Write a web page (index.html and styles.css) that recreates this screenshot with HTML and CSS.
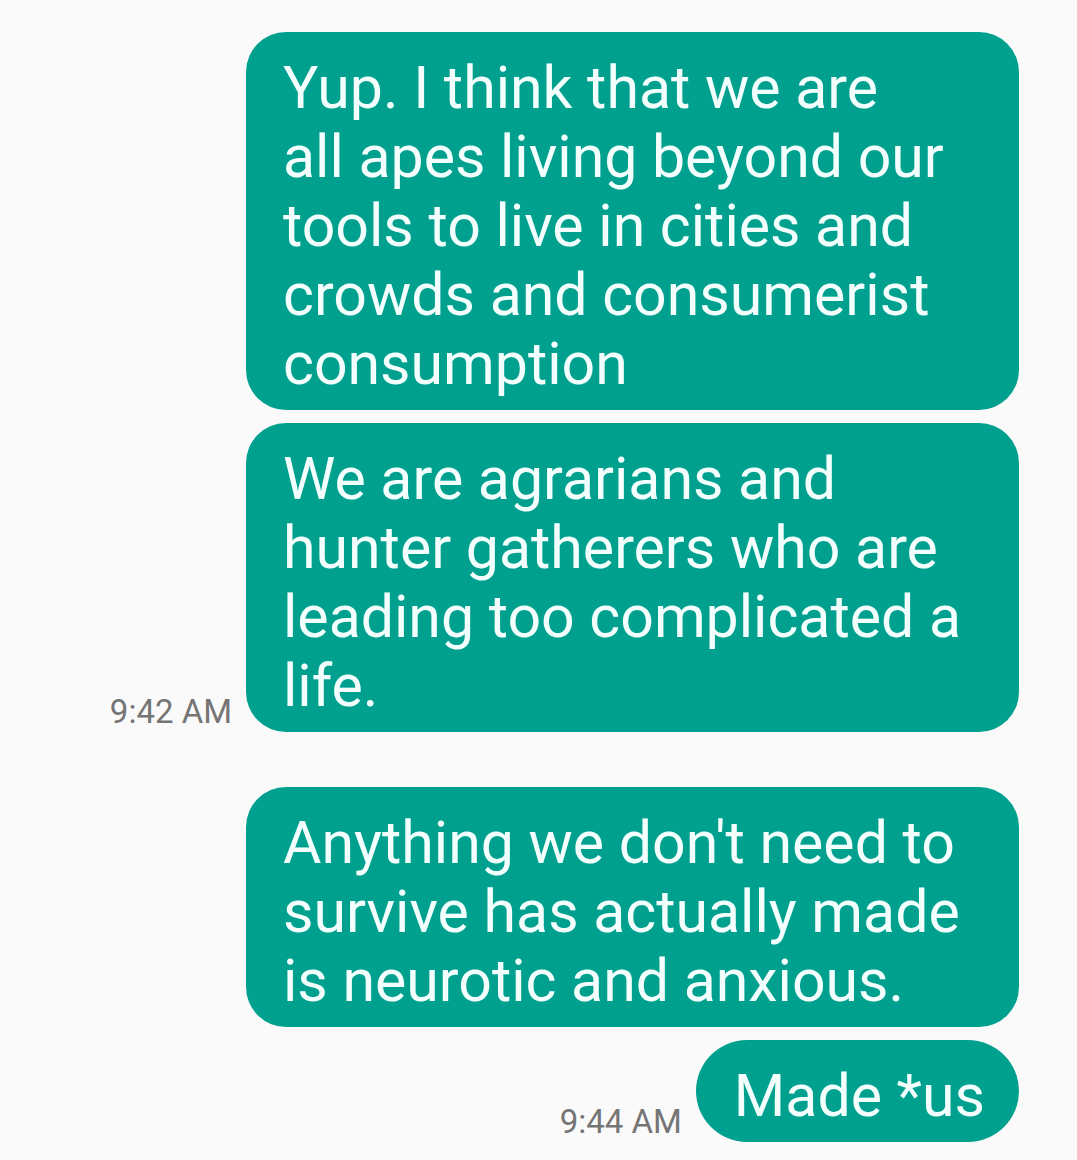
FILE: index.html
```html
<!DOCTYPE html>
<html lang="en">
<head>
    <meta charset="UTF-8">
    <meta name="viewport" content="width=device-width, initial-scale=1.0">
    <title>Messages</title>
    <link rel="stylesheet" href="styles.css">
</head>
<body>
    <div class="thread">
        <div class="group">
            <div class="row">
                <div class="bubble">Yup. I think that we are<br>all apes living beyond our tools to live in cities and crowds and consumerist consumption</div>
            </div>
            <div class="row">
                <span class="time">9:42 AM</span>
                <div class="bubble">We are agrarians and hunter gatherers who are leading too complicated a life.</div>
            </div>
        </div>

        <div class="group">
            <div class="row">
                <div class="bubble">Anything we don't need to survive has actually made is neurotic and anxious.</div>
            </div>
            <div class="row">
                <span class="time">9:44 AM</span>
                <div class="bubble short">Made *us</div>
            </div>
        </div>
    </div>
</body>
</html>
```

FILE: styles.css
```css
:root {
    --bubble-color: #00a08f;
    --bubble-text: #f2fffd;
    --background-color: #fafafa;
    --time-color: #757575;
}

*, *::before, *::after {
    box-sizing: border-box;
}

body {
    margin: 0;
    background-color: var(--background-color);
    font-family: Roboto, "Noto Sans", "Liberation Sans", sans-serif;
    min-height: 100vh;
}

.thread {
    display: flex;
    flex-direction: column;
    gap: 55px;
    padding: 32px 58px 0 0;
}

.group {
    display: flex;
    flex-direction: column;
    gap: 13px;
}

.row {
    display: flex;
    justify-content: flex-end;
    align-items: flex-end;
    gap: 14px;
}

.bubble {
    width: 773px;
    padding: 21px 36px 12px 37px;
    background-color: var(--bubble-color);
    color: var(--bubble-text);
    font-size: 59px;
    line-height: 69px;
    border-radius: 40px;
}

.bubble.short {
    width: auto;
    padding: 21px 34px 12px 38px;
    border-radius: 51px;
}

.time {
    color: var(--time-color);
    font-size: 33px;
    line-height: 1;
    margin-bottom: 4px;
}
```
